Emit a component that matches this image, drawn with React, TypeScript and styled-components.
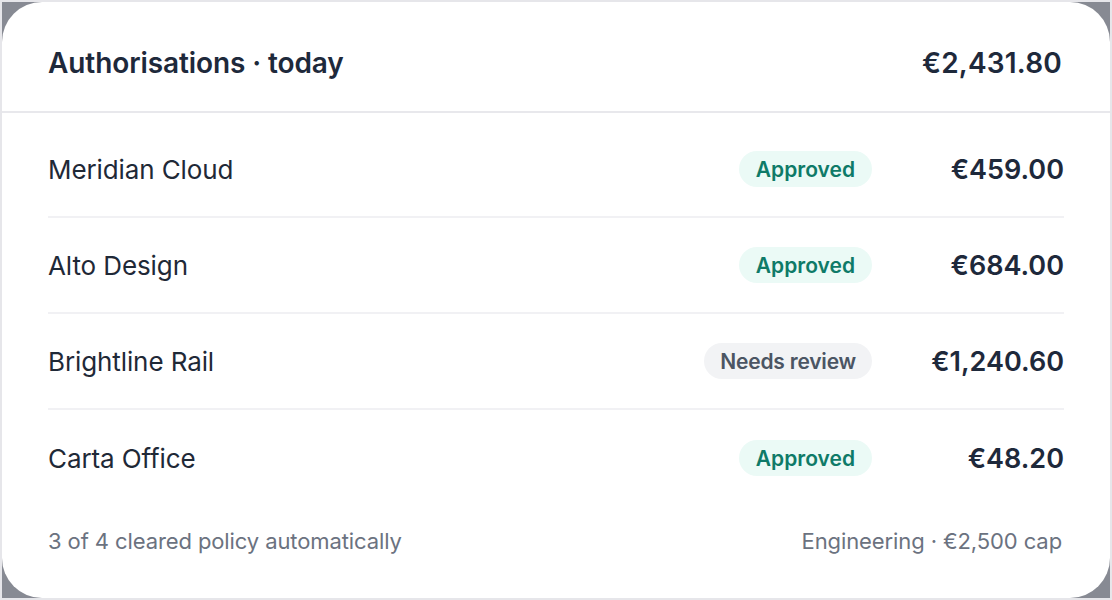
import React from "react";
import styled, { createGlobalStyle } from "styled-components";

const Global = createGlobalStyle`
  html, body { margin: 0; padding: 0; background: #e6e6ea; }
  body { font-family: Inter, "Noto Sans", sans-serif; -webkit-font-smoothing: antialiased; }
  * { box-sizing: border-box; }
`;

const Frame = styled.div`
  width: 1112px;
  height: 600px;
  border: 2px solid #e6e6ea;
  background: #878a93;
`;

const Card = styled.section`
  height: 100%;
  background: #ffffff;
  border-radius: 40px;
  display: flex;
  flex-direction: column;
  overflow: hidden;
`;

const Header = styled.header`
  height: 111px;
  flex: none;
  display: flex;
  align-items: center;
  justify-content: space-between;
  padding: 12px 48px 0 46px;
  border-bottom: 2px solid #e8e8ec;
  color: #1e293b;
  font-size: 28px;
  font-weight: 600;
`;

const Title = styled.span`
  letter-spacing: -0.1px;
`;

const Total = styled.span`
  letter-spacing: 0.2px;
`;

const List = styled.div`
  padding: 9px 46px 0 46px;
  display: flex;
  flex-direction: column;
`;

const Row = styled.div<{ $last?: boolean }>`
  height: 96px;
  display: flex;
  align-items: center;
  gap: 24px;
  border-bottom: ${(p) => (p.$last ? "none" : "2px solid #f1f1f4")};
`;

const Name = styled.span`
  flex: 1;
  font-size: 26px;
  font-weight: 400;
  color: #1f2937;
  letter-spacing: -0.1px;
`;

const Badge = styled.span<{ $tone: "ok" | "review" }>`
  height: 36px;
  padding: 0 ${(p) => (p.$tone === "ok" ? 17 : 16)}px;
  border-radius: 18px;
  display: inline-flex;
  align-items: center;
  font-size: 21px;
  font-weight: 600;
  letter-spacing: ${(p) => (p.$tone === "ok" ? 0 : -0.2)}px;
  background: ${(p) => (p.$tone === "ok" ? "#ebfaf6" : "#f2f3f5")};
  color: ${(p) => (p.$tone === "ok" ? "#0e7a68" : "#4b5563")};
`;

const Amount = styled.span`
  width: 168px;
  text-align: right;
  font-size: 27px;
  font-weight: 600;
  color: #1e293b;
`;

const Footer = styled.footer`
  flex: 1;
  display: flex;
  align-items: center;
  justify-content: space-between;
  padding: 0 48px 22px 46px;
  font-size: 22px;
  letter-spacing: -0.1px;
  color: #6b7280;
`;

const rows: { name: string; status: "ok" | "review"; amount: string }[] = [
  { name: "Meridian Cloud", status: "ok", amount: "€459.00" },
  { name: "Alto Design", status: "ok", amount: "€684.00" },
  { name: "Brightline Rail", status: "review", amount: "€1,240.60" },
  { name: "Carta Office", status: "ok", amount: "€48.20" },
];

export default function App() {
  return (
    <>
      <Global />
      <Frame>
        <Card>
          <Header>
            <Title>Authorisations · today</Title>
            <Total>€2,431.80</Total>
          </Header>
          <List>
            {rows.map((r, i) => (
              <Row key={r.name} $last={i === rows.length - 1}>
                <Name>{r.name}</Name>
                <Badge $tone={r.status}>{r.status === "ok" ? "Approved" : "Needs review"}</Badge>
                <Amount>{r.amount}</Amount>
              </Row>
            ))}
          </List>
          <Footer>
            <span>3 of 4 cleared policy automatically</span>
            <span>Engineering · €2,500 cap</span>
          </Footer>
        </Card>
      </Frame>
    </>
  );
}
